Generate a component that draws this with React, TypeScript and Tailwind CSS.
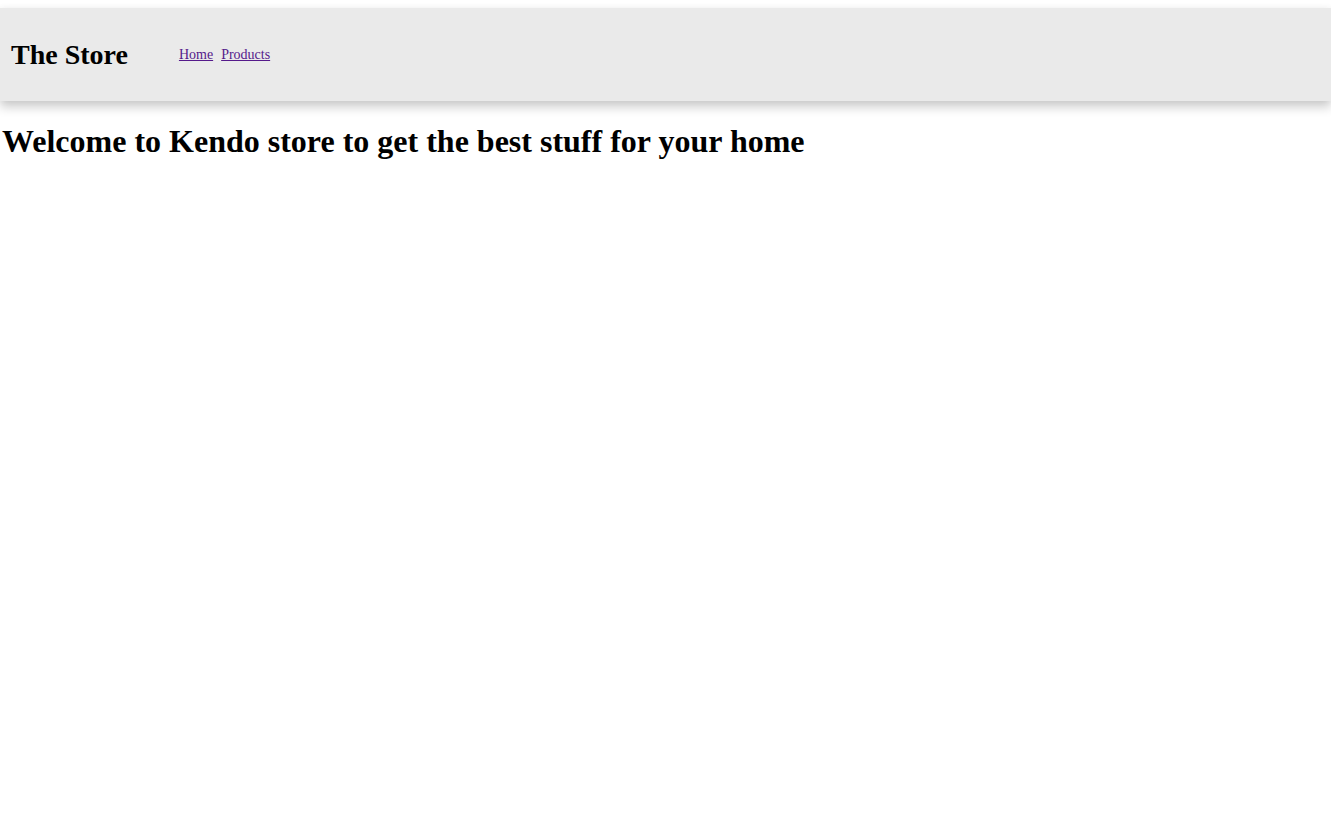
export default function App() {
  return (
    <div className="min-h-screen bg-white text-black font-['Liberation_Serif','Times_New_Roman',serif]">
      {/* ヘッダー */}
      <header className="mt-[8px] h-[93px] bg-[#eaeaea] flex items-center shadow-[0_6px_10px_rgba(0,0,0,0.2),0_0_8px_rgba(0,0,0,0.04)]">
        <h2 className="pl-[11px] text-[28px] font-bold leading-[normal]">The Store</h2>
        <nav className="ml-[51px] flex gap-[8px] text-[14px] leading-[normal]">
          <a href="#" className="text-[#551a8b] underline">
            Home
          </a>
          <a href="#" className="text-[#551a8b] underline">
            Products
          </a>
        </nav>
      </header>

      <main>
        <h1 className="mt-[22px] pl-[2px] text-[32px] font-bold leading-[normal]">
          Welcome to Kendo store to get the best stuff for your home
        </h1>
      </main>
    </div>
  );
}
